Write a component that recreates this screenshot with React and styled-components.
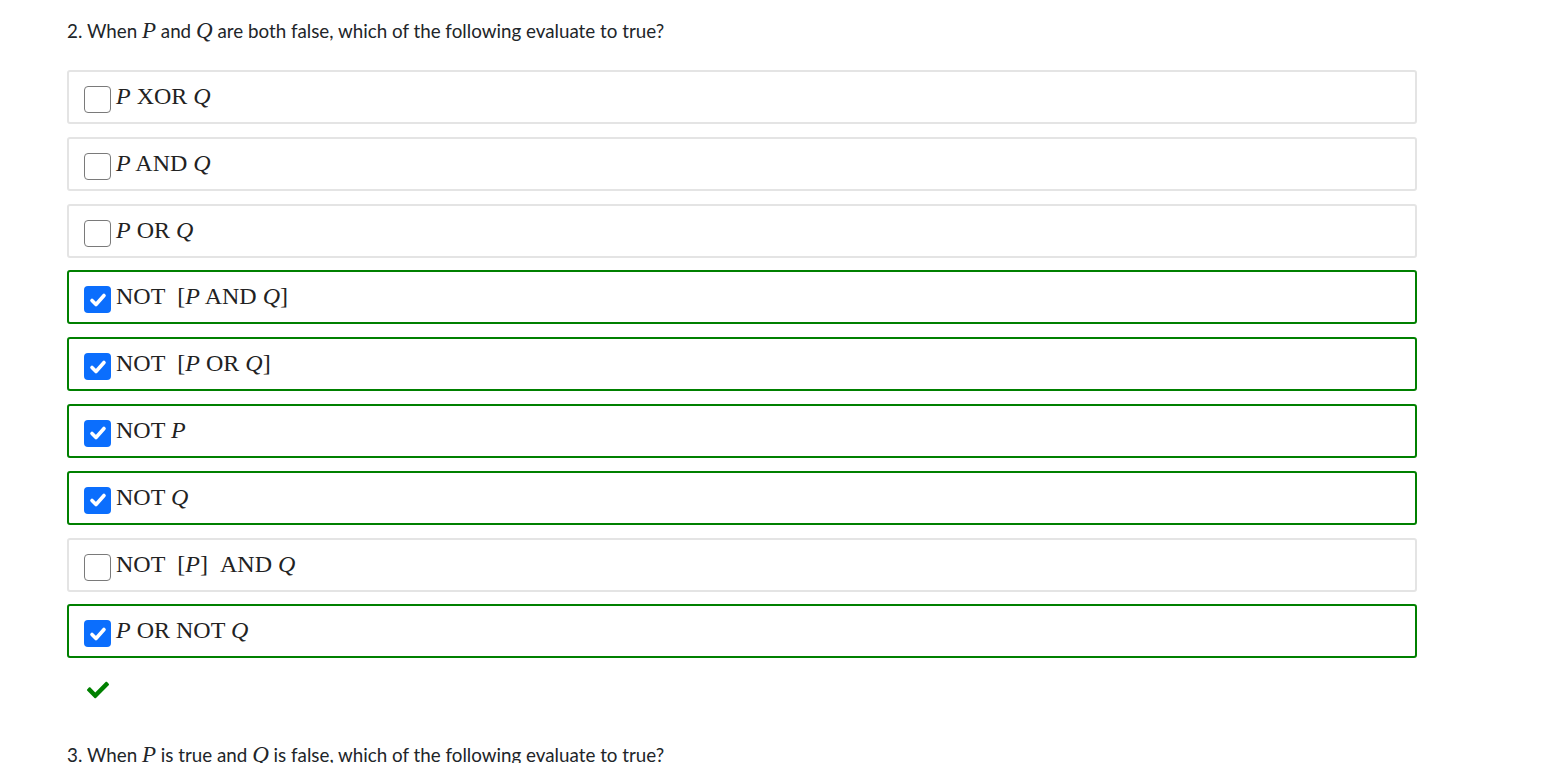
import React from 'react';
import styled, { createGlobalStyle } from 'styled-components';
import { FaCheck } from 'react-icons/fa';

const Global = createGlobalStyle`
  body {
    margin: 0;
    background: #fff;
    font-family: "Source Sans Pro", Lato, "Noto Sans", sans-serif;
    color: #212529;
  }
`;

const questions = [
  {
    n: 2,
    text: [' When ', 'P', ' and ', 'Q', ' are both false, which of the following evaluate to true?'],
    options: [
      { label: [['i', 'P'], ' XOR ', ['i', 'Q']], checked: false },
      { label: [['i', 'P'], ' AND ', ['i', 'Q']], checked: false },
      { label: [['i', 'P'], ' OR ', ['i', 'Q']], checked: false },
      { label: ['NOT\u00a0\u00a0[', ['i', 'P'], ' AND ', ['i', 'Q'], ']'], checked: true },
      { label: ['NOT\u00a0\u00a0[', ['i', 'P'], ' OR ', ['i', 'Q'], ']'], checked: true },
      { label: ['NOT ', ['i', 'P']], checked: true },
      { label: ['NOT ', ['i', 'Q']], checked: true },
      { label: ['NOT\u00a0\u00a0[', ['i', 'P'], ']\u00a0\u00a0AND ', ['i', 'Q']], checked: false },
      { label: [['i', 'P'], ' OR NOT ', ['i', 'Q']], checked: true },
    ],
  },
];

const App = () => {
  const q = questions[0];
  return (
    <Page>
      <Global />
      <Question>
        {q.n}.{q.text.map((t, i) => (i % 2 === 1 ? <MathVar key={i}>{t}</MathVar> : <span key={i}>{t}</span>))}
      </Question>
      <List>
        {q.options.map((o, i) => (
          <Option key={i} correct={o.checked}>
            <Box checked={o.checked}>
              {o.checked && (
                <svg width="18" height="16" viewBox="0 0 18 16">
                  <path d="M3 8.5 L7 12.5 L15 3.5" fill="none" stroke="#fff" strokeWidth="3.6" strokeLinecap="round" strokeLinejoin="round" />
                </svg>
              )}
            </Box>
            <Label>
              {o.label.map((p, j) => (Array.isArray(p) ? <em key={j}>{p[1]}</em> : <span key={j}>{p}</span>))}
            </Label>
          </Option>
        ))}
      </List>
      <Result>
        <FaCheck size={22} color="#008000" />
      </Result>
      <Question>
        3. When <MathVar>P</MathVar> is true and <MathVar>Q</MathVar> is false, which of the following evaluate to true?
      </Question>
    </Page>
  );
};

export default App;

const Page = styled.div`
  padding: 19px 0 0 67px;
  width: 1350px;
`;

const Question = styled.div`
  font-size: 18.8px;
  line-height: 24px;
  white-space: pre-wrap;
`;

const MathVar = styled.span`
  font-family: "Liberation Serif", "DejaVu Serif", serif;
  font-style: italic;
  font-size: 23px;
`;

const List = styled.div`
  display: flex;
  flex-direction: column;
  gap: 12.8px;
  margin-top: 27px;
`;

const Option = styled.div`
  display: flex;
  align-items: center;
  height: 54px;
  box-sizing: border-box;
  padding: 5px 15px 0;
  border: 2px solid ${p => (p.correct ? '#008000' : '#e4e4e4')};
  border-radius: 3px;
`;

const Box = styled.div`
  width: 27px;
  height: 27px;
  box-sizing: border-box;
  border-radius: 4px;
  border: ${p => (p.checked ? 'none' : '1.5px solid #7a7a7a')};
  background: ${p => (p.checked ? '#0b6efd' : '#fff')};
  display: flex;
  align-items: center;
  justify-content: center;
  margin-right: 5px;
  flex-shrink: 0;
`;

const Label = styled.div`
  font-family: "Liberation Serif", "DejaVu Serif", serif;
  font-size: 24px;
  color: #222;
  margin-top: -6px;
  white-space: pre;
  em { font-style: italic; }
`;

const Result = styled.div`
  padding: 21px 0 0 20px;
  height: 48px;
  box-sizing: border-box;
  margin-bottom: 37px;
`;
